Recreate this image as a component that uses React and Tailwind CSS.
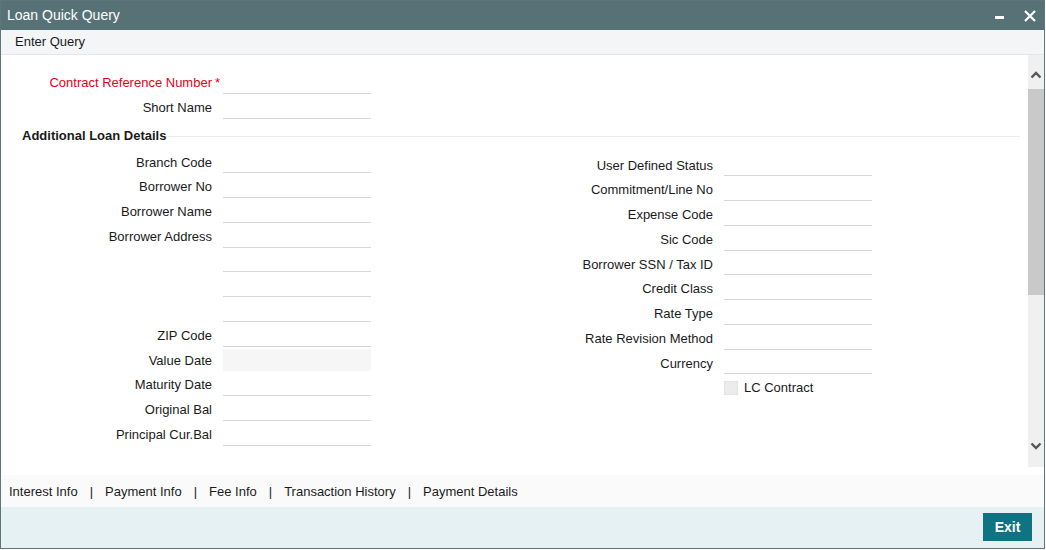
import React from 'react';

const leftRows = [
  { label: 'Branch Code' },
  { label: 'Borrower No' },
  { label: 'Borrower Name' },
  { label: 'Borrower Address' },
  { label: '' },
  { label: '' },
  { label: '' },
  { label: 'ZIP Code' },
  { label: 'Value Date', disabled: true },
  { label: 'Maturity Date' },
  { label: 'Original Bal' },
  { label: 'Principal Cur.Bal' },
];

const rightRows = [
  'User Defined Status',
  'Commitment/Line No',
  'Expense Code',
  'Sic Code',
  'Borrower SSN / Tax ID',
  'Credit Class',
  'Rate Type',
  'Rate Revision Method',
  'Currency',
];

const tabs = ['Interest Info', 'Payment Info', 'Fee Info', 'Transaction History', 'Payment Details'];

function Field({ label, required, disabled, className = 'h-[24.75px]' }) {
  return (
    <div className={`flex items-center ${className}`}>
      <div className={`w-[211px] text-right whitespace-nowrap ${required ? 'text-[#e2001a]' : 'text-[#1a1a1a]'}`}>
        {label}
      </div>
      <div className="w-[11px] pl-[3px] text-[#e2001a]">{required ? '*' : ''}</div>
      {disabled ? (
        <div className="w-[148px] h-[22px] bg-[#f6f6f6]" />
      ) : (
        <div className="w-[148px] h-[22px] border-b border-[#d6d6d6]" />
      )}
    </div>
  );
}

function Chevron({ down }) {
  return (
    <svg width="12" height="8" viewBox="0 0 12 8">
      <path
        d={down ? 'M1.5 1.5 L6 6 L10.5 1.5' : 'M1.5 6.5 L6 2 L10.5 6.5'}
        fill="none"
        stroke="#555"
        strokeWidth="2.4"
      />
    </svg>
  );
}

export default function App() {
  return (
    <div
      className="w-[1045px] h-[549px] border border-[#5e7679] bg-white flex flex-col text-[13px] text-[#1a1a1a] overflow-hidden"
      style={{ fontFamily: '"Liberation Sans", Arial, sans-serif' }}
    >
      <div className="h-[29px] bg-[#577276] flex items-center justify-between pl-[6px] pr-[8px]">
        <span className="text-white text-[14px]">Loan Quick Query</span>
        <div className="flex items-center gap-[20px]">
          <div className="w-[9px] h-[3px] bg-white mt-[3px]" />
          <svg width="12" height="12" viewBox="0 0 12 12">
            <path d="M1 1 L11 11 M11 1 L1 11" stroke="#fff" strokeWidth="2.2" />
          </svg>
        </div>
      </div>

      <div className="h-[25px] bg-[#f4f5f7] border-b border-[#e4e6e8] flex items-center pl-[14px]">
        Enter Query
      </div>

      <div className="h-[420px] flex">
        <div className="flex-1 pt-[15px]">
          <Field label="Contract Reference Number" required className="h-[25px]" />
          <Field label="Short Name" className="h-[25px]" />
          <div className="h-[30px] flex items-center pl-[21px] pr-[8px] pt-[2px]">
            <span className="font-bold whitespace-nowrap">Additional Loan Details</span>
            <div className="flex-1 h-px bg-[#ececec] mt-[1px]" />
          </div>
          <div className="flex">
            <div>
              {leftRows.map((r, i) => (
                <Field key={i} label={r.label} disabled={r.disabled} />
              ))}
            </div>
            <div className="ml-[131px] pt-[3px]">
              {rightRows.map(l => (
                <Field key={l} label={l} />
              ))}
              <div className="flex items-center h-[24.75px]">
                <div className="w-[222px]" />
                <div className="w-[14px] h-[14px] bg-[#ececec] border border-[#e4e4e4]" />
                <span className="ml-[6px]">LC Contract</span>
              </div>
            </div>
          </div>
        </div>
        <div className="w-[16px] mb-[8px] bg-[#f0f0f0] flex flex-col">
          <div className="h-[34px] flex justify-center pt-[16px]">
            <Chevron />
          </div>
          <div className="h-[206px] bg-[#c9c9c9]" />
          <div className="flex-1" />
          <div className="h-[34px] flex justify-center pt-[9px]">
            <Chevron down />
          </div>
        </div>
      </div>

      <div className="h-[32px] bg-[#fafafa] flex items-center pl-[8px] pt-[2px] whitespace-nowrap">
        {tabs.map((t, i) => (
          <React.Fragment key={t}>
            {i > 0 && <span className="mx-[12px] text-[#222]">|</span>}
            <span>{t}</span>
          </React.Fragment>
        ))}
      </div>

      <div className="flex-1 bg-[#e6f1f3] flex justify-end items-start pt-[6px] pr-[12px]">
        <button className="w-[49px] h-[28px] bg-[#0f7382] text-white font-bold text-[14px]">Exit</button>
      </div>
    </div>
  );
}
